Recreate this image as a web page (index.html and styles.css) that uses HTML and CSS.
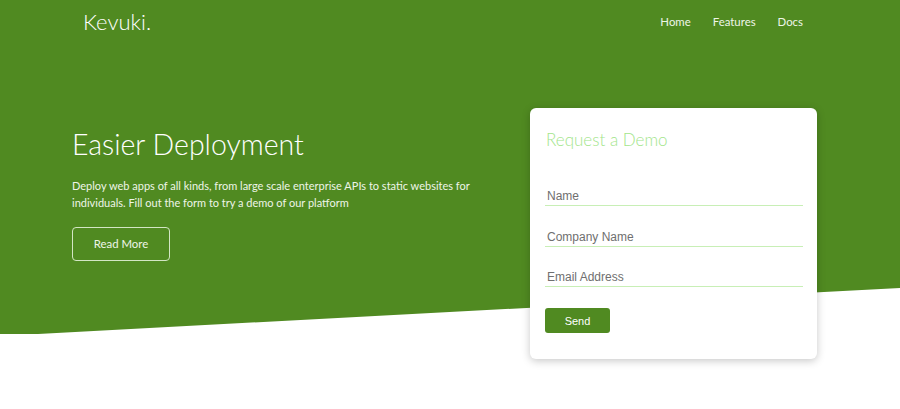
FILE: index.html
```html
<!DOCTYPE html>
<html lang="en">
<head>
<meta charset="utf-8">
<title>Kevuki</title>
<link rel="stylesheet" href="styles.css">
</head>
<body>
<div class="page">
  <header class="topbar">
    <a class="logo" href="#">Kevuki.</a>
    <nav class="nav">
      <a href="#">Home</a>
      <a href="#">Features</a>
      <a href="#">Docs</a>
    </nav>
  </header>
  <section class="hero">
    <div class="hero-text">
      <h1 class="hero-title">Easier Deployment</h1>
      <p class="hero-desc">Deploy web apps of all kinds, from large scale enterprise APIs to static websites for individuals. Fill out the form to try a demo of our platform</p>
      <a class="btn-outline" href="#">Read More</a>
    </div>
    <form class="card">
      <h3 class="card-title">Request a Demo</h3>
      <input class="field" type="text" placeholder="Name">
      <input class="field" type="text" placeholder="Company Name">
      <input class="field" type="email" placeholder="Email Address">
      <button class="btn-send" type="button">Send</button>
    </form>
  </section>
</div>
</body>
</html>
```
FILE: styles.css
```css
* { box-sizing: border-box; }
html, body { margin: 0; padding: 0; background: #fff; }
body { font-family: "Lato", "Liberation Sans", sans-serif; font-weight: 300; color: #fff; }

.page { position: relative; min-height: 409px; }
.page::before {
  content: "";
  position: absolute;
  left: 0; top: 0; right: 0;
  height: 334px;
  background: #508a21;
  clip-path: polygon(0 0, 100% 0, 100% 288px, 38px 334px, 0 334px);
  z-index: 0;
}

.topbar {
  position: relative;
  z-index: 1;
  height: 44px;
  display: flex;
  align-items: center;
  justify-content: space-between;
  padding: 0 86px 0 83px;
}
.logo {
  font-size: 22px;
  font-weight: 300;
  color: #fff;
  text-decoration: none;
  line-height: 1.2;
}
.nav { display: flex; }
.nav a {
  font-size: 11.4px;
  font-weight: 400;
  color: #eef5e8;
  text-decoration: none;
  padding: 0 11px;
  line-height: 1.2;
}

.hero {
  position: relative;
  z-index: 1;
  display: flex;
  align-items: flex-start;
  justify-content: space-between;
  padding: 64px 83px 0 72px;
}
.hero-text { padding-top: 19px; width: 420px; }
.hero-title {
  margin: 0;
  font-size: 28.5px;
  font-weight: 300;
  line-height: 1.2;
  color: #fff;
}
.hero-desc {
  margin: 15.5px 0 0;
  font-size: 11px;
  font-weight: 400;
  line-height: 17.5px;
  color: #eef5e8;
  width: 410px;
}
.btn-outline {
  display: inline-flex;
  align-items: center;
  justify-content: center;
  margin-top: 15px;
  width: 98px;
  height: 34px;
  border: 1px solid #d3e6c4;
  border-radius: 4px;
  font-size: 11.4px;
  font-weight: 400;
  color: #eef5e8;
  text-decoration: none;
}

.card {
  width: 287px;
  background: #fff;
  border-radius: 6px;
  box-shadow: 0 2px 8px rgba(0,0,0,0.22);
  padding: 22px 14px 26px 15px;
  display: flex;
  flex-direction: column;
  align-items: stretch;
}
.card-title {
  margin: 0 0 35px 1px;
  font-size: 17px;
  font-weight: 300;
  line-height: 20px;
  color: #a3e58b;
}
.field {
  display: block;
  width: 100%;
  margin: 0 0 19.5px;
  padding: 4px 2px 2px;
  border: none;
  border-bottom: 1px solid #c8efb6;
  font-family: "Liberation Sans", Arial, sans-serif;
  font-size: 12px;
  line-height: 14px;
  height: 21px;
  color: #555;
  background: transparent;
  outline: none;
}
.field::placeholder { color: #6f6f6f; }
.field:last-of-type { margin-bottom: 21px; }
.btn-send {
  align-self: flex-start;
  width: 65px;
  height: 25px;
  border: none;
  border-radius: 3px;
  background: #508a21;
  color: #fff;
  font-family: "Liberation Sans", Arial, sans-serif;
  font-size: 11px;
  font-weight: 400;
  padding: 0;
}
```
